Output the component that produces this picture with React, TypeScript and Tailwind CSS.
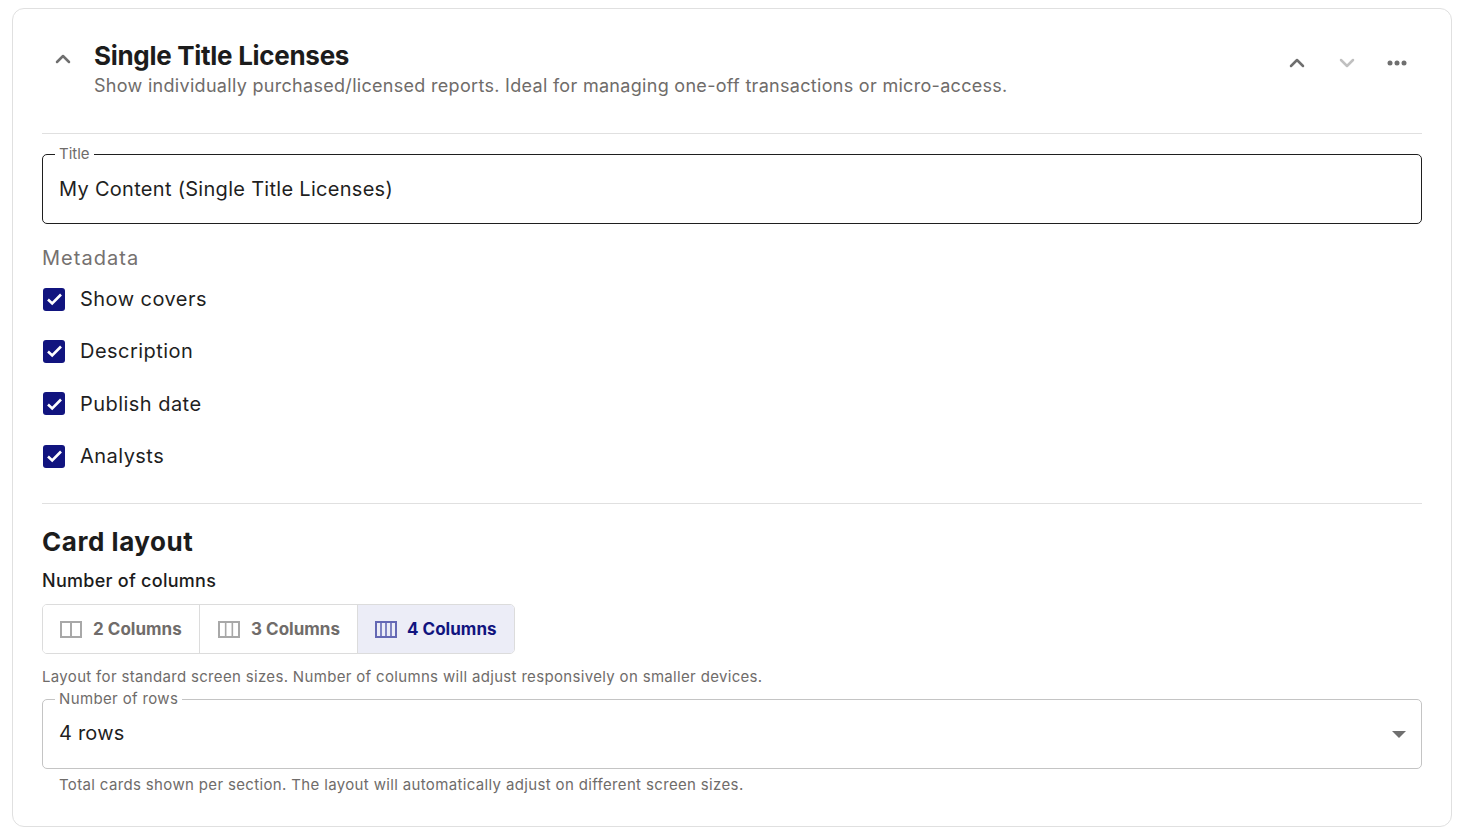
import { ChevronUp, ChevronDown } from 'lucide-react';

const FONT = "font-['Inter','Liberation_Sans',sans-serif]";

const METADATA = ['Show covers', 'Description', 'Publish date', 'Analysts'];

function ColumnsIcon({ count, className }: { count: number; className: string }) {
  const lines = [];
  for (let i = 1; i < count; i++) {
    const x = 1 + (20 / count) * i;
    lines.push(<path key={i} d={`M${x} 1V15`} strokeWidth={count === 2 ? 2 : 1.6} />);
  }
  return (
    <svg width="22" height="17" viewBox="0 0 22 17" fill="none" stroke="currentColor" className={className}>
      <rect x="1" y="1" width="20" height="15" strokeWidth="2" />
      {lines}
    </svg>
  );
}

function ColumnButton({ count, width, active, pad }: { count: number; width: string; active?: boolean; pad: string }) {
  return (
    <div
      className={`${width} ${pad} flex items-center h-full border-r border-[#dcdcdc] last:border-r-0 ${
        active ? 'bg-[#ecedf7] gap-[10px]' : 'bg-white gap-[11px]'
      }`}
    >
      <ColumnsIcon count={count} className={active ? 'text-[#6468b4]' : 'text-[#a8a8a8]'} />
      <span className={`pt-[2px] text-[17px] font-bold tracking-[0.02px] ${active ? 'text-[#11147f]' : 'text-[#706c6a]'}`}>
        {count} Columns
      </span>
    </div>
  );
}

function CheckRow({ label }: { label: string }) {
  return (
    <label className="flex items-center h-[24px]">
      <span className="w-[22px] h-[23px] ml-px mr-[15px] rounded-[3px] bg-[#11147f] flex items-center justify-center">
        <svg width="17" height="14" viewBox="0 0 17 14" fill="none">
          <path d="M2 7.5L6.2 11.5L15 2.5" stroke="white" strokeWidth="2.6" />
        </svg>
      </span>
      <span className="text-[20px] text-[#1f1f1f] tracking-[0.46px]">{label}</span>
    </label>
  );
}

export default function App() {
  return (
    <div className={`${FONT} bg-white h-[834px] pt-2 px-3 overflow-hidden`}>
      <div className="w-[1440px] h-[819px] border border-[#e0e0e0] rounded-[12px] px-[29px] flex flex-col">
        {/* Header */}
        <div className="h-[125px] border-b border-[#e0e0e0] flex items-start shrink-0">
          <ChevronUp size={24} strokeWidth={2.5} className="text-[#6f6f6f] ml-[9px] mt-[38px]" />
          <div className="ml-[19px] mt-[30px]">
            <h2 className="text-[26px] leading-[34px] font-bold text-[#1c1c1c] tracking-[-0.3px]">Single Title Licenses</h2>
            <p className="text-[18px] leading-[26px] text-[#6f6c6a] tracking-[0.3px]">
              Show individually purchased/licensed reports. Ideal for managing one-off transactions or micro-access.
            </p>
          </div>
          <div className="ml-auto mt-[42px] flex items-center gap-[26px] mr-[13px]">
            <ChevronUp size={24} strokeWidth={2.5} className="text-[#6f6f6f]" />
            <ChevronDown size={24} strokeWidth={2.5} className="text-[#c0c0c0]" />
            <svg width="24" height="24" viewBox="0 0 24 24" fill="currentColor" className="text-[#6f6f6f]">
              <circle cx="5" cy="12" r="2.5" />
              <circle cx="12" cy="12" r="2.5" />
              <circle cx="19" cy="12" r="2.5" />
            </svg>
          </div>
        </div>

        {/* Title field */}
        <div className="relative mt-5 h-[70px] border border-[#1f1f1f] rounded-[5px] flex items-center pl-4 shrink-0">
          <span className="absolute left-[12px] -top-[10px] px-[4px] bg-white text-[15px] leading-[18px] text-[#6f6c6a]">Title</span>
          <span className="text-[20px] text-[#1f1f1f] tracking-[0.29px]">My Content (Single Title Licenses)</span>
        </div>

        {/* Metadata */}
        <div className="mt-[20px] text-[20px] leading-[28px] text-[#75716f] tracking-[1.05px]">Metadata</div>
        <div className="mt-[15px] flex flex-col gap-[28.4px]">
          {METADATA.map((item) => (
            <CheckRow key={item} label={item} />
          ))}
        </div>
        <div className="mt-[35px] border-t border-[#e0e0e0]" />

        {/* Card layout */}
        <h3 className="mt-[20px] text-[26px] leading-[36px] font-bold text-[#1c1c1c] tracking-[0.55px]">Card layout</h3>
        <div className="mt-[9px] text-[18px] leading-[24px] font-medium text-[#1c1c1c] tracking-[0.27px]">Number of columns</div>
        <div className="mt-[11px] w-[473px] h-[50px] flex border border-[#dcdcdc] rounded-[5px] overflow-hidden shrink-0">
          <ColumnButton count={2} width="w-[157px]" pad="pl-[17px]" />
          <ColumnButton count={3} width="w-[158px]" pad="pl-[18px]" />
          <ColumnButton count={4} width="flex-1" pad="pl-[17px]" active />
        </div>
        <p className="mt-[13px] text-[15px] leading-[20px] text-[#6f6c6a] tracking-[0.33px]">
          Layout for standard screen sizes. Number of columns will adjust responsively on smaller devices.
        </p>

        {/* Rows select */}
        <div className="relative mt-[12px] h-[70px] border border-[#c4c4c4] rounded-[5px] flex items-center pl-4 pr-[15px] shrink-0">
          <span className="absolute left-[12px] -top-[10px] px-[4px] bg-white text-[15px] leading-[18px] text-[#6f6c6a] tracking-[0.36px]">Number of rows</span>
          <span className="mb-[2px] text-[20px] text-[#1f1f1f] tracking-[0.2px]">4 rows</span>
          <svg width="14" height="7" viewBox="0 0 14 7" className="ml-auto text-[#6f6f6f]" fill="currentColor">
            <path d="M0 0H14L7 7Z" />
          </svg>
        </div>
        <p className="mt-[6px] ml-[17px] text-[15px] leading-[20px] text-[#6f6c6a] tracking-[0.35px]">
          Total cards shown per section. The layout will automatically adjust on different screen sizes.
        </p>
      </div>
    </div>
  );
}
